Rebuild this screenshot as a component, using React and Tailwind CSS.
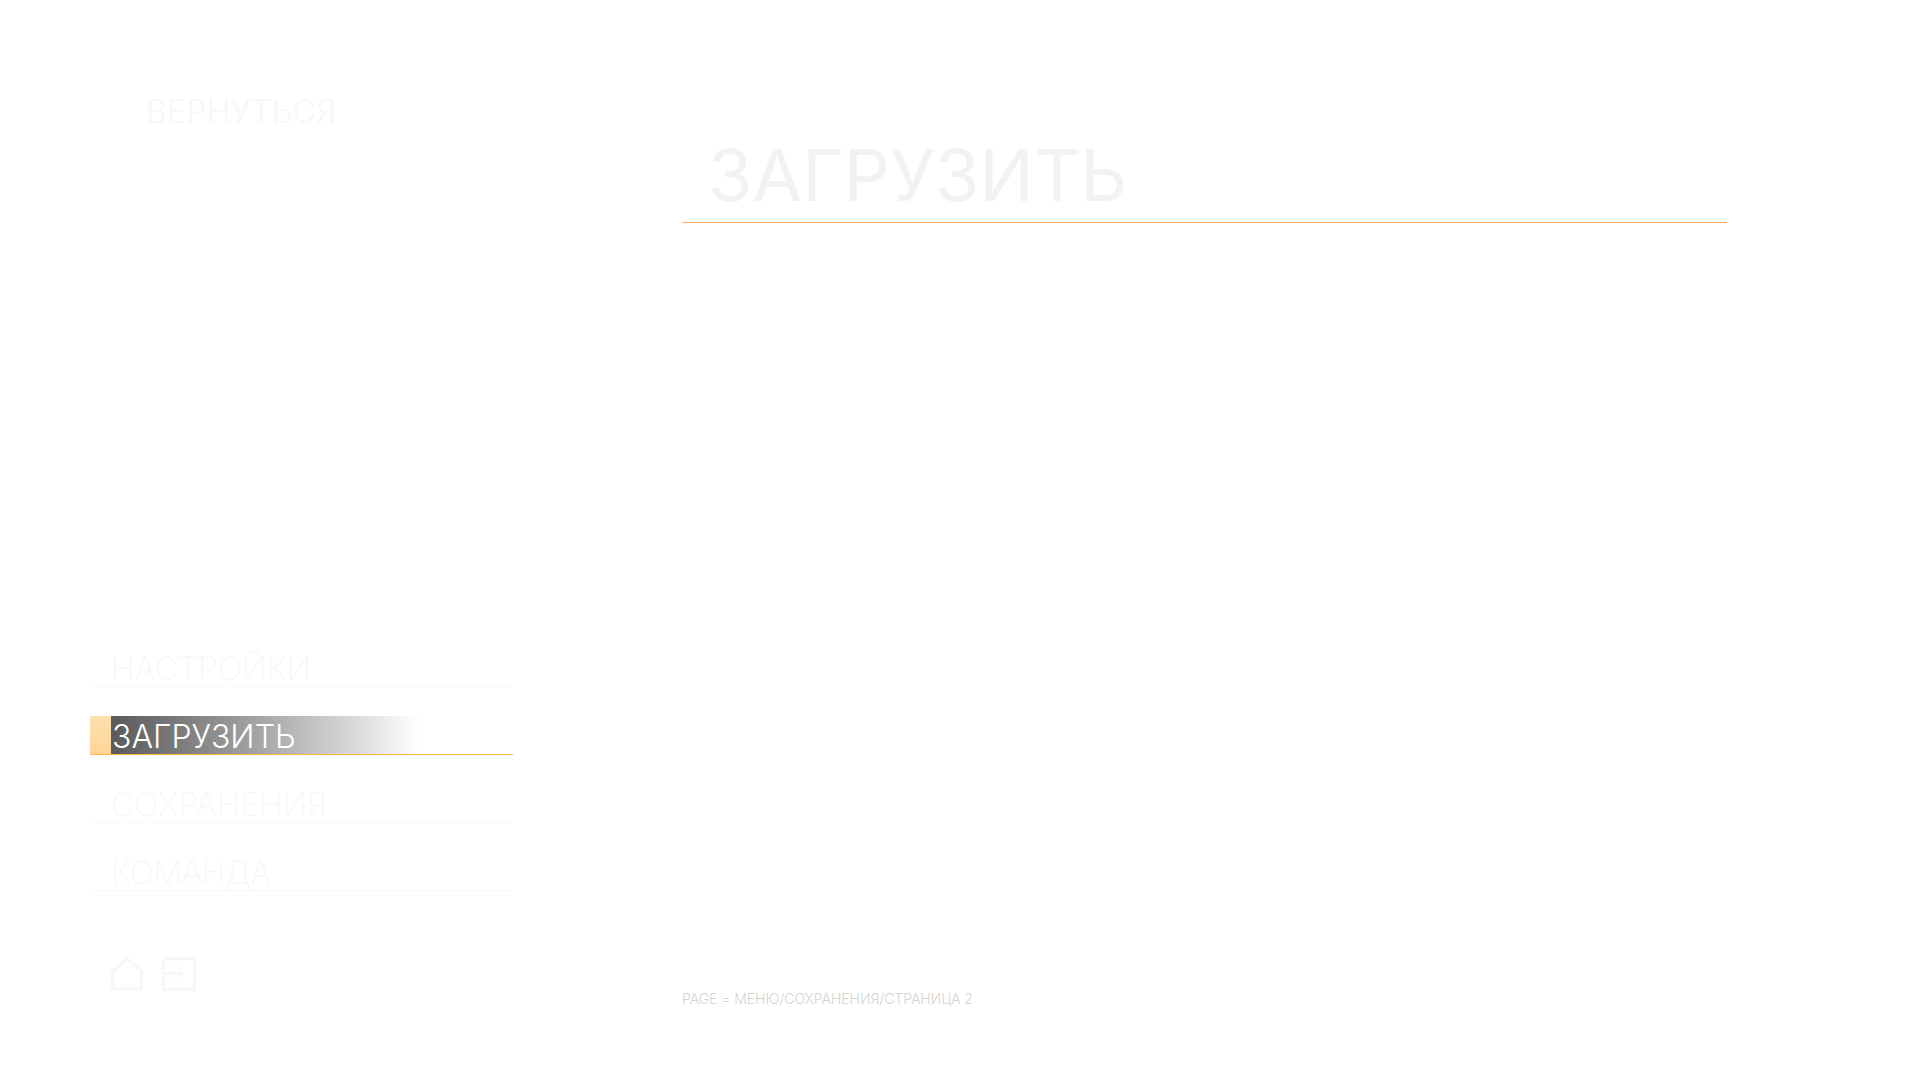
import React from 'react';

const navItems = [
    { label: 'НАСТРОЙКИ', className: '' },
    { label: 'ЗАГРУЗИТЬ', active: true },
    { label: 'СОХРАНЕНИЯ', className: '' },
    { label: 'КОМАНДА', className: 'tracking-[-0.6px]' },
];

const HomeIcon = () => (
    <svg width="34" height="34" viewBox="0 0 34 34" fill="none" stroke="#f7f7f7" strokeWidth="3">
        <path d="M2.5 31.5V14.5L17 1.5L31.5 14.5V31.5Z" />
    </svg>
);

const ExitIcon = () => (
    <svg width="34" height="34" viewBox="0 0 34 34" fill="none" stroke="#f7f7f7">
        <path d="M1.5 13V1.500H32.500V32.500H1.500V20" strokeWidth="3" />
        <path d="M0 16.500H20" strokeWidth="3" />
        <path d="M12 7L21.500 16.500L12 26" strokeWidth="1.500" stroke="#f9f9f9" />
    </svg>
);

const NavItem = ({ label, active, className }) => {
    if (active) {
        return (
            <div className="flex h-[39px] border-b border-[#ffb653]">
                <div className="w-[21px] bg-gradient-to-b from-[#ffe0b0] to-[#ffd596]" />
                <div className="w-[309px] pl-[1px] bg-gradient-to-r from-[#5a5a5a] to-[#ffffff] text-[32px] leading-[41px] font-light text-white">
                    {label}
                </div>
            </div>
        );
    }
    return (
        <div className={`h-[39px] pl-[21px] border-b border-[#f7f7f7] text-[32px] leading-[41px] font-extralight text-[#f7f7f7] ${className}`}>
            {label}
        </div>
    );
};

export default function App() {
    return (
        <div className="flex h-screen bg-white font-['Inter',sans-serif] overflow-hidden">
            <aside className="ml-[90px] w-[423px] flex flex-col">
                <div className="mt-[92px] ml-[56px] text-[32px] leading-[39px] font-light tracking-[0.3px] text-[#f7f7f7]">
                    ВЕРНУТЬСЯ
                </div>
                <nav className="mt-[517px] flex flex-col gap-[29px]">
                    {navItems.map((item) => (
                        <NavItem key={item.label} {...item} />
                    ))}
                </nav>
                <div className="mt-[66px] ml-[20px] flex gap-[18px]">
                    <HomeIcon />
                    <ExitIcon />
                </div>
            </aside>
            <main className="ml-[169px] w-[1045px] flex flex-col">
                <h1 className="mt-[132px] h-[91px] pl-[26px] border-b border-[#ffac60] text-[72px] leading-[85px] font-normal text-[#f2f2f2]">
                    ЗАГРУЗИТЬ
                </h1>
                <p className="mt-[767px] text-[14px] leading-[17px] font-light tracking-[-0.04px] text-[#d4d4d4]">
                    PAGE = МЕНЮ/СОХРАНЕНИЯ/СТРАНИЦА 2
                </p>
            </main>
        </div>
    );
}
